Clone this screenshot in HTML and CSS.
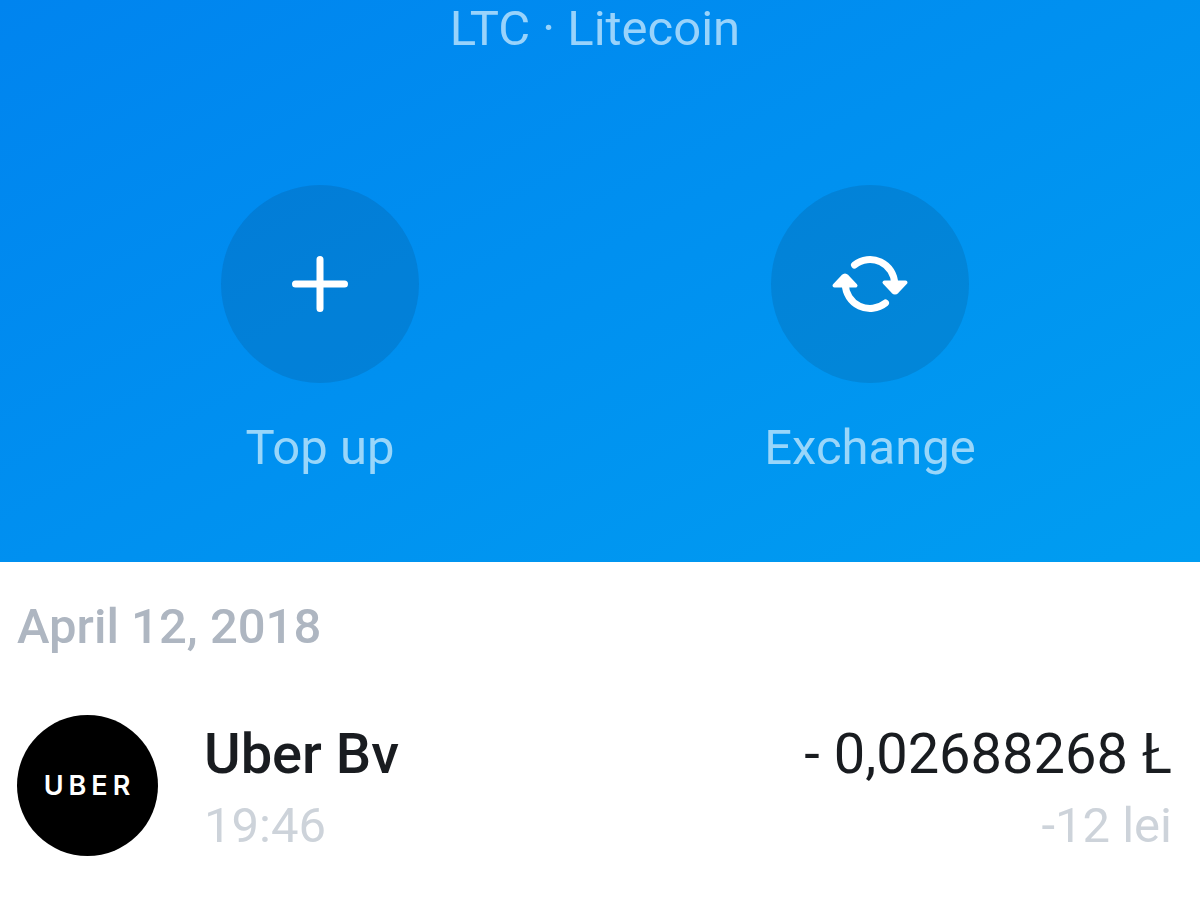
FILE: index.html
```html
<!DOCTYPE html>
<html lang="en">
<head>
<meta charset="utf-8">
<meta name="viewport" content="width=device-width, initial-scale=1">
<title>Litecoin account</title>
<link rel="stylesheet" href="styles.css">
</head>
<body>
<header class="account">
  <h1 class="account-name">LTC · Litecoin</h1>
  <div class="actions">
    <button class="action" type="button">
      <span class="action-icon">
        <svg width="60" height="60" viewBox="0 0 60 60" fill="none" stroke="#fff" stroke-width="7" stroke-linecap="round" aria-hidden="true"><path d="M30 5.500V54.500M5.500 30H54.500"/></svg>
      </span>
      <span class="action-label">Top up</span>
    </button>
    <button class="action" type="button">
      <span class="action-icon">
        <svg width="76" height="60" viewBox="0 0 76 60" aria-hidden="true">
          <g fill="none" stroke="#fff" stroke-width="7" stroke-linecap="round"><path d="M22.500 11A24.700 24.700 0 0 1 62.700 30"/><path d="M53.500 49A24.700 24.700 0 0 1 13.300 30"/></g>
          <g fill="#fff" stroke="#fff" stroke-width="4" stroke-linejoin="round"><path d="M52.500 28.500H73.500L65 37.500Q63 39.500 61 37.500Z"/><path d="M23.500 31.500H2.500L11 22.500Q13 20.500 15 22.500Z"/></g>
        </svg>
      </span>
      <span class="action-label">Exchange</span>
    </button>
  </div>
</header>
<main class="history">
  <h2 class="date">April 12, 2018</h2>
  <article class="transaction">
    <div class="merchant-logo">UBER</div>
    <div class="details">
      <h3 class="merchant">Uber Bv</h3>
      <time class="secondary">19:46</time>
    </div>
    <div class="amounts">
      <div class="amount">- 0,02688268 Ł</div>
      <div class="secondary">-12 lei</div>
    </div>
  </article>
</main>
</body>
</html>
```
FILE: styles.css
```css
* { box-sizing: border-box; }
body { margin: 0; background: #fff; font-family: Roboto, sans-serif; color: #191c20; }
h1, h2, h3 { margin: 0; }
.account { padding-bottom: 86px; background: linear-gradient(152deg, #0084ef, #009df1); }
.account-name { padding: 1px 10px 0 0; font-size: 49px; line-height: 56px; font-weight: 400; text-align: center; color: #99d3fb; }
.actions { display: grid; grid-template-columns: 1fr 1fr; padding: 128px 55px 0 45px; }
.action { display: flex; flex-direction: column; align-items: center; justify-self: center; gap: 37px; padding: 0; border: 0; background: none; font: inherit; cursor: pointer; }
.action-icon { display: flex; align-items: center; justify-content: center; width: 198px; height: 198px; border-radius: 50%; background: rgba(13, 43, 68, 0.14); }
.action-label { font-size: 49px; line-height: 56px; color: #99d6fa; }
.history { padding: 37px 28px 0 17px; }
.date { font-size: 49px; line-height: 56px; font-weight: 500; color: #aeb6c1; }
.transaction { display: flex; align-items: center; gap: 46px; margin-top: 53px; }
.merchant-logo { display: flex; align-items: center; justify-content: center; flex: none; width: 141px; height: 141px; padding-left: 4px; border-radius: 50%; background: #000; color: #fff; font-family: Inter, sans-serif; font-size: 27px; font-weight: 600; letter-spacing: 5px; }
.details, .amounts { padding-top: 10px; }
.details { flex: 1; }
.merchant { font-size: 56px; line-height: 72px; font-weight: 500; }
.amount { font-size: 56px; line-height: 72px; }
.amounts { text-align: right; }
.secondary { display: block; font-size: 49px; line-height: 72px; color: #cdd3da; }
```
